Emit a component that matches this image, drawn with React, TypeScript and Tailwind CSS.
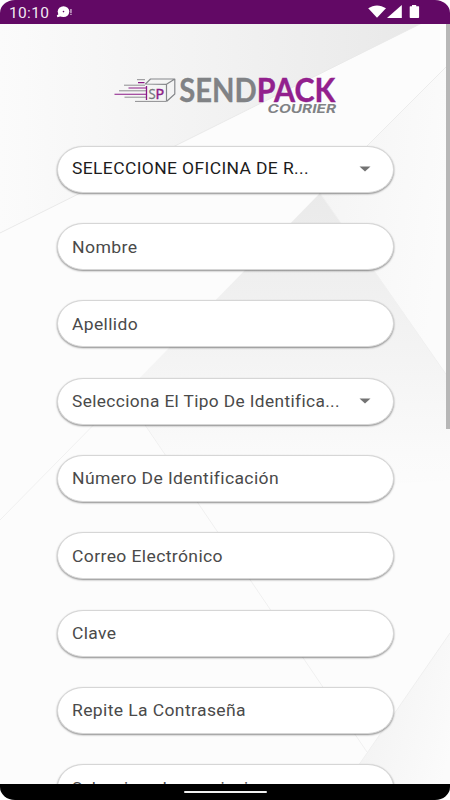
import React from 'react';

interface Field {
  label: string;
  select?: boolean;
  width: number;
  dark?: boolean;
}

const fields: Field[] = [
  { label: 'SELECCIONE OFICINA DE R...', select: true, width: 237, dark: true },
  { label: 'Nombre', width: 65.5 },
  { label: 'Apellido', width: 66 },
  { label: 'Selecciona El Tipo De Identifica...', select: true, width: 268 },
  { label: 'Número De Identificación', width: 207 },
  { label: 'Correo Electrónico', width: 151 },
  { label: 'Clave', width: 44.5 },
  { label: 'Repite La Contraseña', width: 174 },
  { label: 'Selecciona La provincia', width: 186 },
];

const Background = () => (
  <svg className="absolute inset-0" width="450" height="800" viewBox="0 0 450 800">
    <defs>
      <linearGradient id="top" x1="0" x2="1">
        <stop offset="0" stopColor="#fbfbfb" />
        <stop offset="0.5" stopColor="#f2f2f2" />
        <stop offset="1" stopColor="#e8e8e8" />
      </linearGradient>
      <linearGradient id="tri" x1="0" y1="0" x2="0" y2="1">
        <stop offset="0" stopColor="#eaeaea" />
        <stop offset="0.5" stopColor="#f3f3f3" />
        <stop offset="0.85" stopColor="#fafafa" />
        <stop offset="1" stopColor="#fcfcfc" />
      </linearGradient>
      <linearGradient id="side" x1="0" y1="0" x2="1" y2="0.3">
        <stop offset="0" stopColor="#f4f4f4" />
        <stop offset="1" stopColor="#fbfbfb" />
      </linearGradient>
      <linearGradient id="corner" x1="0" y1="0.4" x2="1" y2="0.8">
        <stop offset="0.2" stopColor="#f3f3f3" />
        <stop offset="1" stopColor="#fbfbfb" />
      </linearGradient>
    </defs>
    <rect width="450" height="800" fill="#fcfcfc" />
    <path d="M0 20H428L0 233Z" fill="url(#top)" />
    <path d="M428 20L0 233" stroke="#e9e9e9" />
    <path d="M450 63L320 193L450 380Z" fill="url(#side)" />
    <path d="M450 63L320 193" stroke="#ececec" />
    <path d="M320 193L124 394L195 497L450 480V380Z" fill="url(#tri)" />
    <path d="M124 394L0 520M124 394L367 752M320 193L450 380" stroke="#f0f0f0" fill="none" />
    <path d="M450 633L345 785H450Z" fill="url(#corner)" />
    <path d="M450 633L345 785" stroke="#efefef" />
  </svg>
);

const StatusBar = () => (
  <header className="relative flex h-[23.5px] shrink-0 items-center bg-[#620965] px-2">
    <svg width="434" height="23" viewBox="8 0 434 23" fill="#fff">
      <text x="9" y="17.5" fontFamily="Roboto, sans-serif" fontSize="15.5" textLength="40" fillOpacity="0.93">
        10:10
      </text>
      <ellipse cx="63.5" cy="11.6" rx="5.8" ry="5.4" />
      <path d="M60 13L56.8 15.6L57.4 17.2L61 16.2Z" />
      <circle cx="63.5" cy="11.6" r="0.8" fill="#620965" />
      <path d="M70.3 9h1.3v4h-1.3zM70.3 13.8h1.3v1.2h-1.3z" fillOpacity="0.75" />
      <path d="M368.2 8.3C373.8 4.4 380.2 4.4 386 8.3L377 17.8Z" />
      <path d="M401.8 5V18H387Z" />
      <path d="M412 5h4.2v1.2h2.4q.5 0 .5.6v10.5q0 .8-.8.8h-7.8q-.8 0-.8-.8V6.8q0-.6.6-.6H412Z" />
    </svg>
  </header>
);

const Logo = () => (
  <svg className="mx-auto mt-[46.5px] block shrink-0" width="230" height="50" viewBox="110 70 230 50">
    <path
      d="M137 79.7H145M124 85.2H145M119 90.8H146M124.5 97.2H146M135 101.4H166"
      stroke="#8e8e91"
      strokeWidth="1"
    />
    <path
      d="M145.5 84L150.5 79H174.8L166.5 84.3ZM166.5 84.3V101.5M174.8 79V94L166.5 101.5"
      stroke="#86888b"
      strokeWidth="1.2"
      strokeLinejoin="round"
      fill="none"
    />
    <path d="M138 82.6H144.5M128.5 88H146M114.5 94.3H146" stroke="#8b1a86" strokeWidth="1.1" />
    <path d="M146.5 86V100" stroke="#8b1a86" strokeWidth="1.3" />
    <g fontFamily="'Open Sans', sans-serif" fontSize="14.5">
      <text x="148.5" y="98.6" textLength="7.2" lengthAdjust="spacingAndGlyphs" fill="#77797c" stroke="#77797c" strokeWidth="0.3">
        S
      </text>
      <text x="155.6" y="98.6" textLength="8.6" lengthAdjust="spacingAndGlyphs" fill="#8b1a86" stroke="#8b1a86" strokeWidth="0.5">
        P
      </text>
    </g>
    <g fontFamily="Lato, sans-serif" fontWeight="700" fontSize="32.5">
      <text x="179.3" y="101.5" textLength="77.5" lengthAdjust="spacingAndGlyphs" fill="#808285" stroke="#808285" strokeWidth="0.3">
        SEND
      </text>
      <text x="256.8" y="101.5" textLength="78.5" lengthAdjust="spacingAndGlyphs" fill="#92208d" stroke="#92208d" strokeWidth="0.4">
        PACK
      </text>
    </g>
    <text
      x="267.5"
      y="112.5"
      fontFamily="Inter, sans-serif"
      fontWeight="700"
      fontStyle="italic"
      fontSize="11.5"
      textLength="68.5"
      lengthAdjust="spacingAndGlyphs"
      fill="#808285"
    >
      COURIER
    </text>
  </svg>
);

const FormField: React.FC<{ field: Field }> = ({ field }) => (
  <div className="flex h-[47px] shrink-0 items-center rounded-[26px/23.5px] border border-[#d6d6d6] bg-white pl-[14px] shadow-[0_1px_2px_rgba(0,0,0,0.45)]">
    <svg width="275" height="24" viewBox="0 0 275 24">
      <text
        x="0"
        y={field.dark ? 17.2 : 17.7}
        fontFamily="Roboto, sans-serif"
        fontSize="16.3"
        letterSpacing="0.35"
        textLength={field.width}
        lengthAdjust="spacingAndGlyphs"
        fill={field.dark ? '#1c1c1c' : '#4a4a4a'}
      >
        {field.label}
      </text>
    </svg>
    {field.select && (
      <svg className="ml-[12px]" width="12" height="6" viewBox="0 0 12 6">
        <path d="M0.5 0.5H11.5L6 5.5Z" fill="#737373" />
      </svg>
    )}
  </div>
);

export default function App() {
  return (
    <div className="h-[800px] w-[450px] overflow-hidden bg-white">
      <div className="relative flex h-full flex-col overflow-hidden rounded-[15px/13px]">
        <Background />
        <StatusBar />
        <main className="relative flex min-h-0 flex-1 flex-col overflow-hidden">
          <Logo />
          <form className="mt-[25.8px] flex flex-col gap-[30.3px] pr-[56.5px] pl-[57px]">
            {fields.map((field) => (
              <FormField key={field.label} field={field} />
            ))}
          </form>
          <div className="absolute top-0 right-0 h-[405px] w-1 bg-[#b7b7b7]" />
        </main>
        <footer className="relative flex h-4 shrink-0 items-center justify-center bg-black">
          <div className="h-[2.5px] w-[83px] rounded-full bg-[#f0f0f0]" />
        </footer>
      </div>
    </div>
  );
}
